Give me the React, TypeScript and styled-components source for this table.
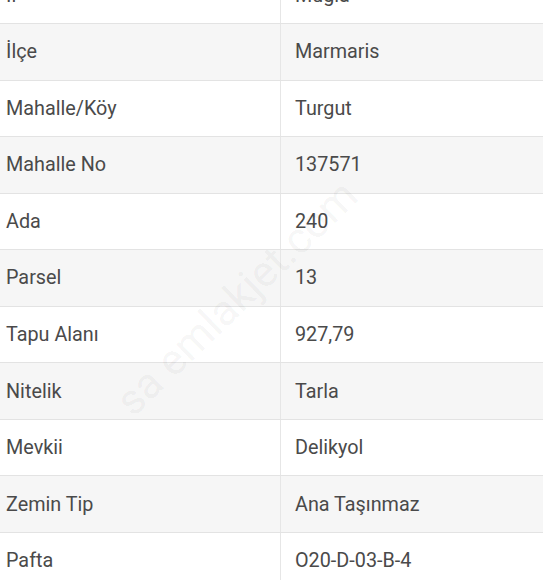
import React from "react";
import styled, { createGlobalStyle } from "styled-components";

const Global = createGlobalStyle`
  html, body { margin: 0; padding: 0; background: #ffffff; }
  body { font-family: Roboto, "Noto Sans", "Liberation Sans", sans-serif; overflow: hidden; }
`;

const Page = styled.div`
  position: relative;
  width: 543px;
  height: 580px;
  overflow: hidden;
  background: #ffffff;
`;

const Table = styled.div`
  display: flex;
  flex-direction: column;
  margin-top: -32.6px;
`;

const Row = styled.div<{ $shade: boolean }>`
  display: grid;
  grid-template-columns: 281px 1fr;
  height: 56.56px;
  box-sizing: border-box;
  border-bottom: 1px solid #e3e3e3;
  background: ${(p) => (p.$shade ? "#f6f6f6" : "#ffffff")};
`;

const Label = styled.div`
  display: flex;
  align-items: center;
  padding-left: 6px;
  border-right: 1px solid #e6e6e6;
  font-size: 19.8px;
  color: #4a4a4a;
`;

const Value = styled.div`
  display: flex;
  align-items: center;
  padding-left: 14px;
  font-size: 19.8px;
  color: #4a4a4a;
`;

const Watermark = styled.div`
  position: absolute;
  left: 138px;
  top: 380px;
  line-height: 1;
  transform: rotate(-44deg);
  transform-origin: left bottom;
  font-family: Roboto, "Liberation Sans", sans-serif;
  font-size: 43px;
  color: rgba(0, 0, 0, 0.05);
  white-space: nowrap;
  pointer-events: none;
`;

const rows: [string, string][] = [
  ["İl", "Muğla"],
  ["İlçe", "Marmaris"],
  ["Mahalle/Köy", "Turgut"],
  ["Mahalle No", "137571"],
  ["Ada", "240"],
  ["Parsel", "13"],
  ["Tapu Alanı", "927,79"],
  ["Nitelik", "Tarla"],
  ["Mevkii", "Delikyol"],
  ["Zemin Tip", "Ana Taşınmaz"],
  ["Pafta", "O20-D-03-B-4"],
];

export default function App() {
  return (
    <Page>
      <Global />
      <Table>
        {rows.map(([k, v], i) => (
          <Row key={k} $shade={i % 2 === 1}>
            <Label>{k}</Label>
            <Value>{v}</Value>
          </Row>
        ))}
      </Table>
      <Watermark>sa emlakjet.com</Watermark>
    </Page>
  );
}
